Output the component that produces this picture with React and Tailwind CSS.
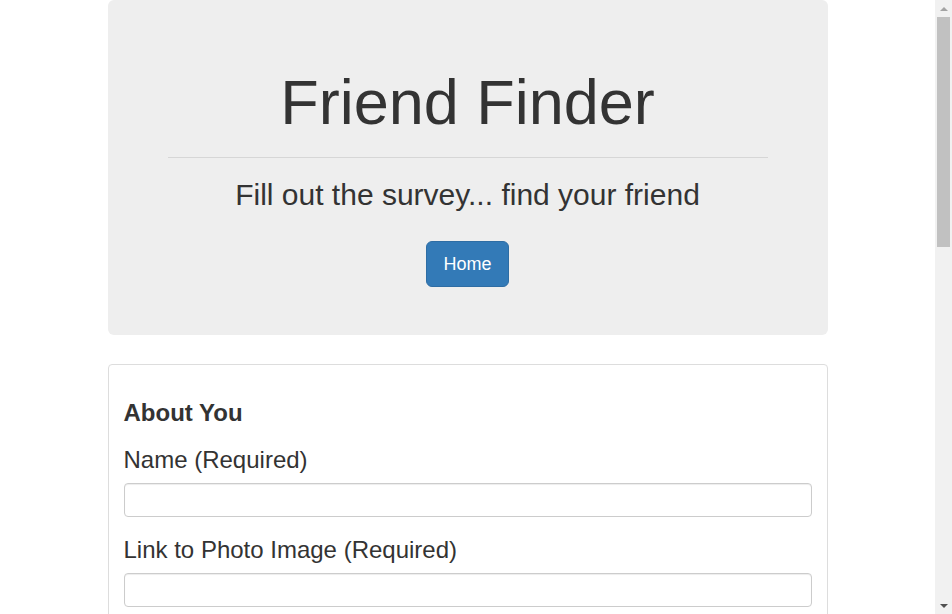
import React from 'react'

// Survey page: jumbotron header + "About You" panel, with a static scrollbar on the right
export default function App() {
  const fields = ['Name (Required)', 'Link to Photo Image (Required)']

  return (
    <div className="flex h-[614px] w-[952px] overflow-hidden bg-white text-[#333] font-['Liberation_Sans',Arial,sans-serif]">
      <div className="flex-1 overflow-hidden">
        <div className="mx-auto w-[720px]">
          {/* Jumbotron */}
          <div className="rounded-[6px] bg-[#eeeeee] px-[60px] py-[48px] text-center">
            <h1 className="mt-[20px] text-[63px] leading-[1.1] font-normal">Friend Finder</h1>
            <hr className="my-[20px] border-0 border-t border-[#d6d6d6]" />
            <h2 className="text-[30px] leading-[1.1] font-normal">Fill out the survey... find your friend</h2>
            <div className="mt-[30px]">
              <button className="rounded-[6px] border border-[#2e6da4] bg-[#337ab7] px-[16px] py-[10px] text-[18px] leading-[24px] text-white">
                Home
              </button>
            </div>
          </div>

          {/* Survey panel */}
          <div className="mt-[29px] rounded-[4px] border border-[#dddddd] px-[15px] pt-[15px] pb-[15px]">
            <h3 className="mt-[20px] text-[24px] leading-[1.1] font-bold">About You</h3>
            {fields.map(label => (
              <div key={label}>
                <h3 className="mt-[20px] mb-[10px] text-[24px] leading-[1.1] font-normal">{label}</h3>
                <input
                  type="text"
                  className="block h-[34px] w-full rounded-[4px] border border-[#cccccc] bg-white px-[12px] text-[14px] shadow-[inset_0_1px_1px_rgba(0,0,0,0.075)] outline-none"
                />
              </div>
            ))}
          </div>
        </div>
      </div>

      {/* Scrollbar */}
      <div className="flex w-[17px] flex-col bg-[#f1f1f1]">
        <div className="flex h-[17px] items-center justify-center">
          <div className="h-0 w-0 border-x-[4px] border-b-[4px] border-x-transparent border-b-[#a3a3a3]" />
        </div>
        <div className="mx-[2px] h-[230px] bg-[#c1c1c1]" />
        <div className="flex-1" />
        <div className="flex h-[17px] items-center justify-center">
          <div className="h-0 w-0 border-x-[4px] border-t-[4px] border-x-transparent border-t-[#505050]" />
        </div>
      </div>
    </div>
  )
}
